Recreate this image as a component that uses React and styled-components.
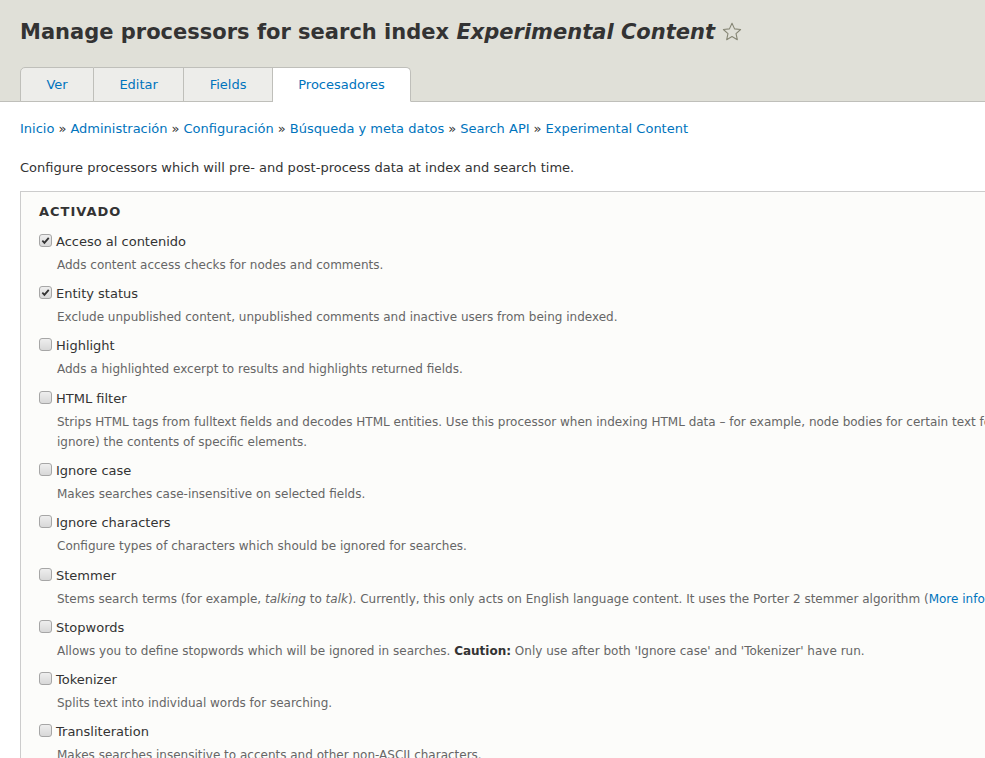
import React from "react";
import styled, { createGlobalStyle } from "styled-components";

const Global = createGlobalStyle`
  html, body { margin: 0; padding: 0; overflow: hidden; background: #fff; }
  body { font-family: "DejaVu Sans", Verdana, sans-serif; color: #333; font-size: 13px; }
`;

const Page = styled.div`
  width: 1330px;
  min-height: 758px;
  background: #fff;
`;

const Header = styled.header`
  background: #e0e0d8;
  border-bottom: 1px solid #bfbfba;
  padding: 17px 20px 0;
`;

const Title = styled.h1`
  margin: 0 0 20px;
  font-size: 21px;
  line-height: 30px;
  font-weight: bold;
  color: #333;
  display: flex;
  align-items: center;
  gap: 6px;
  em { font-style: italic; }
`;

const Tabs = styled.ul`
  list-style: none;
  margin: 0 0 -1px;
  padding: 0;
  display: flex;
`;

const Tab = styled.li`
  height: 33px;
  display: flex;
  align-items: center;
  padding: 0 25.4px;
  border: 1px solid #bfbfba;
  border-left-width: ${p => (p.$first ? "1px" : "0")};
  border-bottom: ${p => (p.$active ? "1px solid #fff" : "1px solid #bfbfba")};
  background: ${p => (p.$active ? "#fff" : "#ededea")};
  border-radius: ${p => (p.$first ? "5px 0 0 0" : p.$last ? "0 5px 0 0" : "0")};
  color: #0074bd;
  font-size: 13px;
`;

const Content = styled.main`
  padding: 18px 20px 0;
`;

const Breadcrumb = styled.nav`
  font-size: 13px;
  line-height: 18px;
  color: #333;
  a { color: #0074bd; text-decoration: none; }
`;

const Sep = styled.span`
  margin: 0 4px;
  font-size: 13px;
`;

const Intro = styled.p`
  margin: 21px 0 14px;
  font-size: 13px;
  line-height: 18px;
  color: #333;
`;

const Fieldset = styled.section`
  border: 1px solid #ccc;
  background: #fcfcfa;
  padding: 11px 18px 20px;
  margin-right: 20px;
`;

const Legend = styled.h2`
  margin: 0 0 12px;
  font-size: 13px;
  line-height: 18px;
  font-weight: bold;
  letter-spacing: 1px;
  text-transform: uppercase;
  color: #333;
`;

const Item = styled.div`
  margin-bottom: 9.7px;
`;

const LabelRow = styled.label`
  display: flex;
  align-items: flex-start;
  gap: 4px;
  font-size: 13px;
  line-height: 18px;
  color: #333;
`;

const Box = styled.span`
  flex: none;
  width: 11px;
  height: 11px;
  margin-top: 1px;
  border: 1px solid #a6a6a6;
  border-radius: 3px;
  background: linear-gradient(#eeeeee, #d8d8d8);
  display: flex;
  align-items: center;
  justify-content: center;
`;

const Desc = styled.div`
  margin: 4px 0 0 18px;
  font-size: 12px;
  line-height: 20.5px;
  color: #666;
  em { font-style: italic; }
  strong { color: #333; font-weight: bold; }
  a { color: #0074bd; text-decoration: none; }
`;

const Star = () => (
  <svg width="22" height="22" viewBox="0 0 24 24" fill="none" stroke="#868675" strokeWidth="1.2" strokeLinejoin="round">
    <path d="M12 2.5l2.8 6.1 6.6.7-5 4.5 1.4 6.6L12 17l-5.8 3.4 1.4-6.6-5-4.5 6.6-.7z" />
  </svg>
);

const Check = ({ checked }) => (
  <Box>
    {checked && (
      <svg width="9" height="9" viewBox="0 0 10 10">
        <path d="M1.5 5.2l2.3 2.4L8.6 2" fill="none" stroke="#333" strokeWidth="2" />
      </svg>
    )}
  </Box>
);

const items = [
  { label: "Acceso al contenido", checked: true, desc: "Adds content access checks for nodes and comments." },
  { label: "Entity status", checked: true, desc: "Exclude unpublished content, unpublished comments and inactive users from being indexed." },
  { label: "Highlight", desc: "Adds a highlighted excerpt to results and highlights returned fields." },
  { label: "HTML filter", desc: "Strips HTML tags from fulltext fields and decodes HTML entities. Use this processor when indexing HTML data – for example, node bodies for certain text formats. The processor also allows to boost (or ignore) the contents of specific elements." },
  { label: "Ignore case", desc: "Makes searches case-insensitive on selected fields." },
  { label: "Ignore characters", desc: "Configure types of characters which should be ignored for searches." },
  {
    label: "Stemmer",
    desc: (
      <>
        Stems search terms (for example, <em>talking</em> to <em>talk</em>). Currently, this only acts on English language content. It uses the Porter 2 stemmer algorithm (<a href="#">More information</a>).
      </>
    ),
  },
  {
    label: "Stopwords",
    desc: (
      <>
        Allows you to define stopwords which will be ignored in searches. <strong>Caution:</strong> Only use after both 'Ignore case' and 'Tokenizer' have run.
      </>
    ),
  },
  { label: "Tokenizer", desc: "Splits text into individual words for searching." },
  { label: "Transliteration", desc: "Makes searches insensitive to accents and other non-ASCII characters." },
];

const crumbs = ["Inicio", "Administración", "Configuración", "Búsqueda y meta datos", "Search API", "Experimental Content"];

export default function App() {
  return (
    <Page>
      <Global />
      <Header>
        <Title>
          <span>
            Manage processors for search index <em>Experimental Content</em>
          </span>
          <Star />
        </Title>
        <Tabs>
          <Tab $first>Ver</Tab>
          <Tab>Editar</Tab>
          <Tab>Fields</Tab>
          <Tab $active $last>Procesadores</Tab>
        </Tabs>
      </Header>
      <Content>
        <Breadcrumb>
          {crumbs.map((c, i) => (
            <React.Fragment key={c}>
              {i > 0 && <Sep>»</Sep>}
              <a href="#">{c}</a>
            </React.Fragment>
          ))}
        </Breadcrumb>
        <Intro>Configure processors which will pre- and post-process data at index and search time.</Intro>
        <Fieldset>
          <Legend>Activado</Legend>
          {items.map(it => (
            <Item key={it.label}>
              <LabelRow>
                <Check checked={it.checked} />
                {it.label}
              </LabelRow>
              <Desc>{it.desc}</Desc>
            </Item>
          ))}
        </Fieldset>
      </Content>
    </Page>
  );
}
